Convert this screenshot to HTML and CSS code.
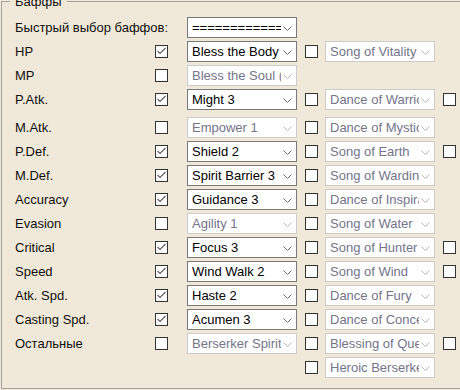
FILE: index.html
```html
<!DOCTYPE html>
<html>
<head>
  <meta charset="utf-8">
  <title>Баффы</title>
  <link rel="stylesheet" href="styles.css">
</head>
<body>
  <fieldset class="buffs">
    <legend>Баффы</legend>
    <div class="rows">
      <div class="row">
        <span class="label label-wide">Быстрый выбор баффов:</span>
        <div class="select"><span class="select-text">====================</span><svg class="arrow" width="9" height="5" viewBox="0 0 9 5"><path d="M0.5 0.5 L4.5 4.5 L8.5 0.5" /></svg></div>
      </div>

      <div class="row">
        <span class="label">HP</span>
        <span class="check is-checked"><svg width="11" height="11" viewBox="0 0 11 11"><path d="M1.5 5 L4 7.5 L9.5 2" /></svg></span>
        <div class="select"><span class="select-text">Bless the Body (6)</span><svg class="arrow" width="9" height="5" viewBox="0 0 9 5"><path d="M0.5 0.5 L4.5 4.5 L8.5 0.5" /></svg></div>
        <span class="check"></span>
        <div class="select is-disabled"><span class="select-text">Song of Vitality</span><svg class="arrow" width="9" height="5" viewBox="0 0 9 5"><path d="M0.5 0.5 L4.5 4.5 L8.5 0.5" /></svg></div>
      </div>

      <div class="row">
        <span class="label">MP</span>
        <span class="check"></span>
        <div class="select is-disabled"><span class="select-text">Bless the Soul (6)</span><svg class="arrow" width="9" height="5" viewBox="0 0 9 5"><path d="M0.5 0.5 L4.5 4.5 L8.5 0.5" /></svg></div>
      </div>

      <div class="row row-spaced">
        <span class="label">P.Atk.</span>
        <span class="check is-checked"><svg width="11" height="11" viewBox="0 0 11 11"><path d="M1.5 5 L4 7.5 L9.5 2" /></svg></span>
        <div class="select"><span class="select-text">Might 3</span><svg class="arrow" width="9" height="5" viewBox="0 0 9 5"><path d="M0.5 0.5 L4.5 4.5 L8.5 0.5" /></svg></div>
        <span class="check"></span>
        <div class="select is-disabled"><span class="select-text">Dance of Warrior</span><svg class="arrow" width="9" height="5" viewBox="0 0 9 5"><path d="M0.5 0.5 L4.5 4.5 L8.5 0.5" /></svg></div>
        <span class="check"></span>
      </div>

      <div class="row">
        <span class="label">M.Atk.</span>
        <span class="check"></span>
        <div class="select is-disabled"><span class="select-text">Empower 1</span><svg class="arrow" width="9" height="5" viewBox="0 0 9 5"><path d="M0.5 0.5 L4.5 4.5 L8.5 0.5" /></svg></div>
        <span class="check"></span>
        <div class="select is-disabled"><span class="select-text">Dance of Mystic</span><svg class="arrow" width="9" height="5" viewBox="0 0 9 5"><path d="M0.5 0.5 L4.5 4.5 L8.5 0.5" /></svg></div>
      </div>

      <div class="row">
        <span class="label">P.Def.</span>
        <span class="check is-checked"><svg width="11" height="11" viewBox="0 0 11 11"><path d="M1.5 5 L4 7.5 L9.5 2" /></svg></span>
        <div class="select"><span class="select-text">Shield 2</span><svg class="arrow" width="9" height="5" viewBox="0 0 9 5"><path d="M0.5 0.5 L4.5 4.5 L8.5 0.5" /></svg></div>
        <span class="check"></span>
        <div class="select is-disabled"><span class="select-text">Song of Earth</span><svg class="arrow" width="9" height="5" viewBox="0 0 9 5"><path d="M0.5 0.5 L4.5 4.5 L8.5 0.5" /></svg></div>
        <span class="check"></span>
      </div>

      <div class="row">
        <span class="label">M.Def.</span>
        <span class="check is-checked"><svg width="11" height="11" viewBox="0 0 11 11"><path d="M1.5 5 L4 7.5 L9.5 2" /></svg></span>
        <div class="select"><span class="select-text">Spirit Barrier 3</span><svg class="arrow" width="9" height="5" viewBox="0 0 9 5"><path d="M0.5 0.5 L4.5 4.5 L8.5 0.5" /></svg></div>
        <span class="check"></span>
        <div class="select is-disabled"><span class="select-text">Song of Warding</span><svg class="arrow" width="9" height="5" viewBox="0 0 9 5"><path d="M0.5 0.5 L4.5 4.5 L8.5 0.5" /></svg></div>
      </div>

      <div class="row">
        <span class="label">Accuracy</span>
        <span class="check is-checked"><svg width="11" height="11" viewBox="0 0 11 11"><path d="M1.5 5 L4 7.5 L9.5 2" /></svg></span>
        <div class="select"><span class="select-text">Guidance 3</span><svg class="arrow" width="9" height="5" viewBox="0 0 9 5"><path d="M0.5 0.5 L4.5 4.5 L8.5 0.5" /></svg></div>
        <span class="check"></span>
        <div class="select is-disabled"><span class="select-text">Dance of Inspiration</span><svg class="arrow" width="9" height="5" viewBox="0 0 9 5"><path d="M0.5 0.5 L4.5 4.5 L8.5 0.5" /></svg></div>
      </div>

      <div class="row">
        <span class="label">Evasion</span>
        <span class="check"></span>
        <div class="select is-disabled"><span class="select-text">Agility 1</span><svg class="arrow" width="9" height="5" viewBox="0 0 9 5"><path d="M0.5 0.5 L4.5 4.5 L8.5 0.5" /></svg></div>
        <span class="check"></span>
        <div class="select is-disabled"><span class="select-text">Song of Water</span><svg class="arrow" width="9" height="5" viewBox="0 0 9 5"><path d="M0.5 0.5 L4.5 4.5 L8.5 0.5" /></svg></div>
      </div>

      <div class="row">
        <span class="label">Critical</span>
        <span class="check is-checked"><svg width="11" height="11" viewBox="0 0 11 11"><path d="M1.5 5 L4 7.5 L9.5 2" /></svg></span>
        <div class="select"><span class="select-text">Focus 3</span><svg class="arrow" width="9" height="5" viewBox="0 0 9 5"><path d="M0.5 0.5 L4.5 4.5 L8.5 0.5" /></svg></div>
        <span class="check"></span>
        <div class="select is-disabled"><span class="select-text">Song of Hunter</span><svg class="arrow" width="9" height="5" viewBox="0 0 9 5"><path d="M0.5 0.5 L4.5 4.5 L8.5 0.5" /></svg></div>
        <span class="check"></span>
      </div>

      <div class="row">
        <span class="label">Speed</span>
        <span class="check is-checked"><svg width="11" height="11" viewBox="0 0 11 11"><path d="M1.5 5 L4 7.5 L9.5 2" /></svg></span>
        <div class="select"><span class="select-text">Wind Walk 2</span><svg class="arrow" width="9" height="5" viewBox="0 0 9 5"><path d="M0.5 0.5 L4.5 4.5 L8.5 0.5" /></svg></div>
        <span class="check"></span>
        <div class="select is-disabled"><span class="select-text">Song of Wind</span><svg class="arrow" width="9" height="5" viewBox="0 0 9 5"><path d="M0.5 0.5 L4.5 4.5 L8.5 0.5" /></svg></div>
        <span class="check"></span>
      </div>

      <div class="row">
        <span class="label">Atk. Spd.</span>
        <span class="check is-checked"><svg width="11" height="11" viewBox="0 0 11 11"><path d="M1.5 5 L4 7.5 L9.5 2" /></svg></span>
        <div class="select"><span class="select-text">Haste 2</span><svg class="arrow" width="9" height="5" viewBox="0 0 9 5"><path d="M0.5 0.5 L4.5 4.5 L8.5 0.5" /></svg></div>
        <span class="check"></span>
        <div class="select is-disabled"><span class="select-text">Dance of Fury</span><svg class="arrow" width="9" height="5" viewBox="0 0 9 5"><path d="M0.5 0.5 L4.5 4.5 L8.5 0.5" /></svg></div>
      </div>

      <div class="row">
        <span class="label">Casting Spd.</span>
        <span class="check is-checked"><svg width="11" height="11" viewBox="0 0 11 11"><path d="M1.5 5 L4 7.5 L9.5 2" /></svg></span>
        <div class="select"><span class="select-text">Acumen 3</span><svg class="arrow" width="9" height="5" viewBox="0 0 9 5"><path d="M0.5 0.5 L4.5 4.5 L8.5 0.5" /></svg></div>
        <span class="check"></span>
        <div class="select is-disabled"><span class="select-text">Dance of Concentration</span><svg class="arrow" width="9" height="5" viewBox="0 0 9 5"><path d="M0.5 0.5 L4.5 4.5 L8.5 0.5" /></svg></div>
      </div>

      <div class="row">
        <span class="label">Остальные</span>
        <span class="check"></span>
        <div class="select is-disabled"><span class="select-text">Berserker Spirit 2</span><svg class="arrow" width="9" height="5" viewBox="0 0 9 5"><path d="M0.5 0.5 L4.5 4.5 L8.5 0.5" /></svg></div>
        <span class="check"></span>
        <div class="select is-disabled"><span class="select-text">Blessing of Queen</span><svg class="arrow" width="9" height="5" viewBox="0 0 9 5"><path d="M0.5 0.5 L4.5 4.5 L8.5 0.5" /></svg></div>
        <span class="check"></span>
      </div>

      <div class="row">
        <span class="check col-second"></span>
        <div class="select is-disabled"><span class="select-text">Heroic Berserker</span><svg class="arrow" width="9" height="5" viewBox="0 0 9 5"><path d="M0.5 0.5 L4.5 4.5 L8.5 0.5" /></svg></div>
      </div>
    </div>
  </fieldset>
</body>
</html>
```

FILE: styles.css
```css
/* window */
html, body {
  margin: 0;
  height: 390px;
  overflow: hidden;
}
body {
  background-color: #f0e9d9;
  font-family: "Liberation Sans", Arial, sans-serif;
  font-size: 13px;
  color: #101010;
}

/* group box */
.buffs {
  box-sizing: border-box;
  width: 480px;
  height: 396px;
  margin: -7px 0 0 1px;
  padding: 8px 0 0 8px;
  border: 1px solid #a3a3a3;
  min-width: 0;
}
.buffs legend {
  padding: 2px 5px 0;
  line-height: 14px;
}

.rows {
  display: flex;
  flex-direction: column;
  gap: 3px;
  padding-left: 5px;
}
.row {
  display: grid;
  grid-template-columns: 140px 32px 118px 20px 118px 13px;
  align-items: center;
  height: 21px;
}
.row-spaced {
  margin-bottom: 4px;
}
.label {
  white-space: nowrap;
  line-height: 15px;
}
.label-wide {
  grid-column: 1 / 3;
}
.col-second {
  grid-column: 4;
}

/* checkbox */
.check {
  box-sizing: border-box;
  width: 13px;
  height: 13px;
  border: 1px solid #333;
  background-color: #fff;
  display: flex;
  align-items: center;
  justify-content: center;
}
.check svg path {
  fill: none;
  stroke: #5a5a5a;
  stroke-width: 1.1;
}

/* combo box */
.select {
  box-sizing: border-box;
  width: 110px;
  height: 21px;
  display: flex;
  align-items: center;
  padding: 0 4px;
  background-color: #fff;
  border: 1px solid #7a7a7a;
  color: #000;
}
.select-text {
  flex: 1;
  overflow: hidden;
  white-space: nowrap;
  line-height: 15px;
}
.select .arrow {
  margin-left: 2px;
  margin-top: 1px;
}
.select .arrow path {
  fill: none;
  stroke: #666;
  stroke-width: 1;
}
.select.is-disabled {
  border-color: #cbcbcb;
  color: #74748a;
}
.select.is-disabled .arrow path {
  stroke: #b8b8b8;
}
```
